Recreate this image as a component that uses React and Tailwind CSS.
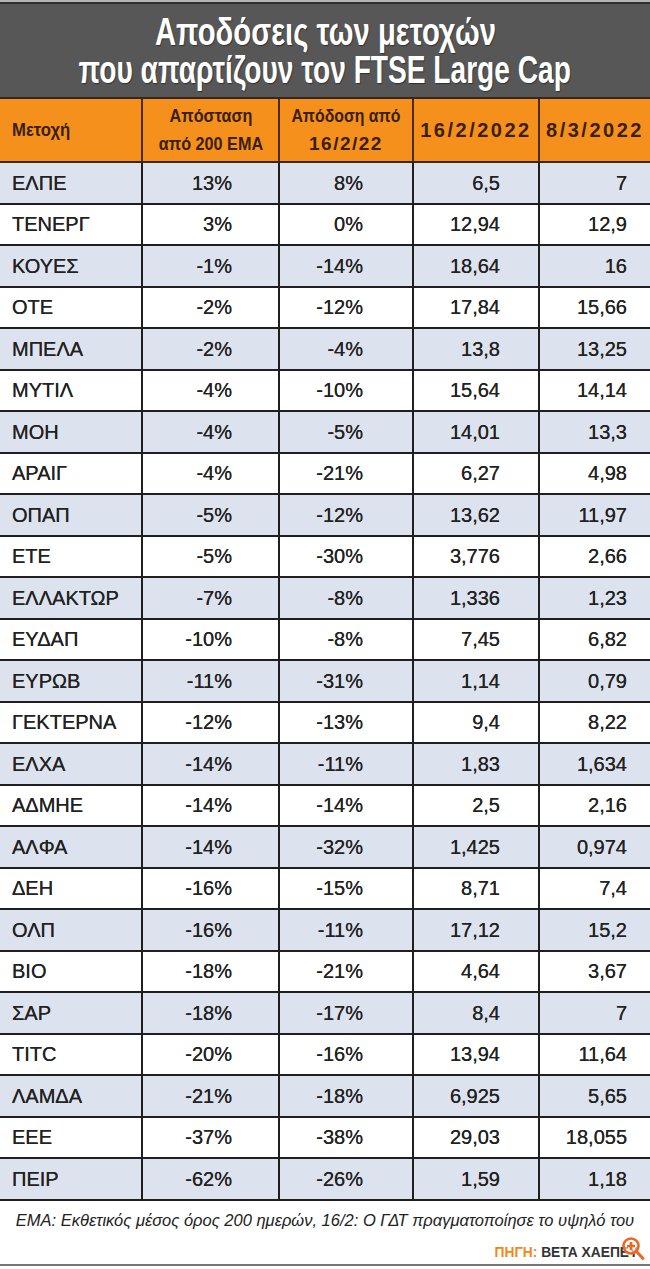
import React from 'react';

const rows = [
  ['ΕΛΠΕ', '13%', '8%', '6,5', '7'],
  ['ΤΕΝΕΡΓ', '3%', '0%', '12,94', '12,9'],
  ['ΚΟΥΕΣ', '-1%', '-14%', '18,64', '16'],
  ['ΟΤΕ', '-2%', '-12%', '17,84', '15,66'],
  ['ΜΠΕΛΑ', '-2%', '-4%', '13,8', '13,25'],
  ['ΜΥΤΙΛ', '-4%', '-10%', '15,64', '14,14'],
  ['ΜΟΗ', '-4%', '-5%', '14,01', '13,3'],
  ['ΑΡΑΙΓ', '-4%', '-21%', '6,27', '4,98'],
  ['ΟΠΑΠ', '-5%', '-12%', '13,62', '11,97'],
  ['ΕΤΕ', '-5%', '-30%', '3,776', '2,66'],
  ['ΕΛΛΑΚΤΩΡ', '-7%', '-8%', '1,336', '1,23'],
  ['ΕΥΔΑΠ', '-10%', '-8%', '7,45', '6,82'],
  ['ΕΥΡΩΒ', '-11%', '-31%', '1,14', '0,79'],
  ['ΓΕΚΤΕΡΝΑ', '-12%', '-13%', '9,4', '8,22'],
  ['ΕΛΧΑ', '-14%', '-11%', '1,83', '1,634'],
  ['ΑΔΜΗΕ', '-14%', '-14%', '2,5', '2,16'],
  ['ΑΛΦΑ', '-14%', '-32%', '1,425', '0,974'],
  ['ΔΕΗ', '-16%', '-15%', '8,71', '7,4'],
  ['ΟΛΠ', '-16%', '-11%', '17,12', '15,2'],
  ['ΒΙΟ', '-18%', '-21%', '4,64', '3,67'],
  ['ΣΑΡ', '-18%', '-17%', '8,4', '7'],
  ['TITC', '-20%', '-16%', '13,94', '11,64'],
  ['ΛΑΜΔΑ', '-21%', '-18%', '6,925', '5,65'],
  ['ΕΕΕ', '-37%', '-38%', '29,03', '18,055'],
  ['ΠΕΙΡ', '-62%', '-26%', '1,59', '1,18'],
];

const grid = 'grid grid-cols-[141px_137px_134px_126px_112px]';

const ZoomIcon = () => (
  <svg width="26" height="28" viewBox="0 0 26 28" fill="none">
    <circle cx="10" cy="11" r="7.5" fill="white" fillOpacity="0.6" stroke="#f0651f" strokeWidth="2.6" />
    <path d="M10 7v8M6 11h8" stroke="#f0651f" strokeWidth="2.6" />
    <path d="M15.5 16.5l6.5 7" stroke="#f0651f" strokeWidth="3" strokeLinecap="round" />
  </svg>
);

export default function App() {
  return (
    <div className="w-[650px] h-[1269px] bg-white font-['Liberation_Sans',Arial,sans-serif] text-[#222]">
      <div className="h-[2px] bg-[#b4b4b4]" />
      <div className="h-[2px] bg-[#2e2e2e]" />
      <div className="h-[93px] bg-[#575757] pt-[9px] flex flex-col items-center text-white font-bold text-[38px] leading-[38px] [text-shadow:1px_1px_1px_rgba(0,0,0,0.45)]">
        <div className="scale-x-[0.77] whitespace-nowrap">Αποδόσεις των μετοχών</div>
        <div className="scale-x-[0.74] whitespace-nowrap">που απαρτίζουν τον FTSE Large Cap</div>
      </div>
      <div className="h-[2px] bg-[#33261c]" />

      <div className={`${grid} h-[64px] bg-[#f5901d] border-b-2 border-[#3e2612] text-[#3a2009] font-bold`}>
        <div className="flex items-center pl-[12px] text-[19px]">
          <span className="scale-x-[0.88] origin-left">Μετοχή</span>
        </div>
        <div className="border-l-2 border-[#4b2c12] flex flex-col items-center justify-center text-[18px] leading-[28px]">
          <span className="scale-x-[0.9]">Απόσταση</span>
          <span className="scale-x-[0.9] whitespace-nowrap">από 200 EMA</span>
        </div>
        <div className="border-l-2 border-[#4b2c12] flex flex-col items-center justify-center text-[18px] leading-[28px]">
          <span className="scale-x-[0.88] whitespace-nowrap">Απόδοση από</span>
          <span className="text-[19px] tracking-[1.5px]">16/2/22</span>
        </div>
        <div className="border-l-2 border-[#4b2c12] flex items-center justify-center text-[20px] tracking-[2.5px]">
          16/2/2022
        </div>
        <div className="border-l-2 border-[#4b2c12] flex items-center justify-center text-[20px] tracking-[2.5px]">
          8/3/2022
        </div>
      </div>

      {rows.map((r, i) => (
        <div
          key={r[0]}
          className={`${grid} h-[41.5px] border-b-2 border-[#1f1f1f] text-[20px] [text-shadow:0_0_0.6px_#222] ${i % 2 === 0 ? 'bg-[#dde3ee]' : 'bg-white'}`}
        >
          <div className="flex items-center pl-[12px]">{r[0]}</div>
          <div className="border-l-2 border-[#1f1f1f] flex items-center justify-end pr-[46px]">{r[1]}</div>
          <div className="border-l-2 border-[#1f1f1f] flex items-center justify-end pr-[49px]">{r[2]}</div>
          <div className="border-l-2 border-[#1f1f1f] flex items-center justify-end pr-[38px]">{r[3]}</div>
          <div className="border-l-2 border-[#1f1f1f] flex items-center justify-end pr-[23px]">{r[4]}</div>
        </div>
      ))}

      <div className="relative h-[63px] flex flex-col">
        <div className="h-[40px] flex items-center justify-center italic text-[16.5px] text-[#222] whitespace-nowrap">
          EMA: Εκθετικός μέσος όρος 200 ημερών, 16/2: Ο ΓΔΤ πραγματοποίησε το υψηλό του
        </div>
        <div className="flex justify-end pr-[12px] text-[15px] font-bold">
          <span className="scale-x-[0.92] origin-right whitespace-nowrap">
            <span className="text-[#f0891c]">ΠΗΓΗ: </span>
            <span className="text-[#333]">ΒΕΤΑ ΧΑΕΠΕΥ</span>
          </span>
        </div>
        <div className="absolute right-[3px] bottom-[1px]">
          <ZoomIcon />
        </div>
      </div>
      <div className="h-[2px] bg-[#777]" />
    </div>
  );
}
